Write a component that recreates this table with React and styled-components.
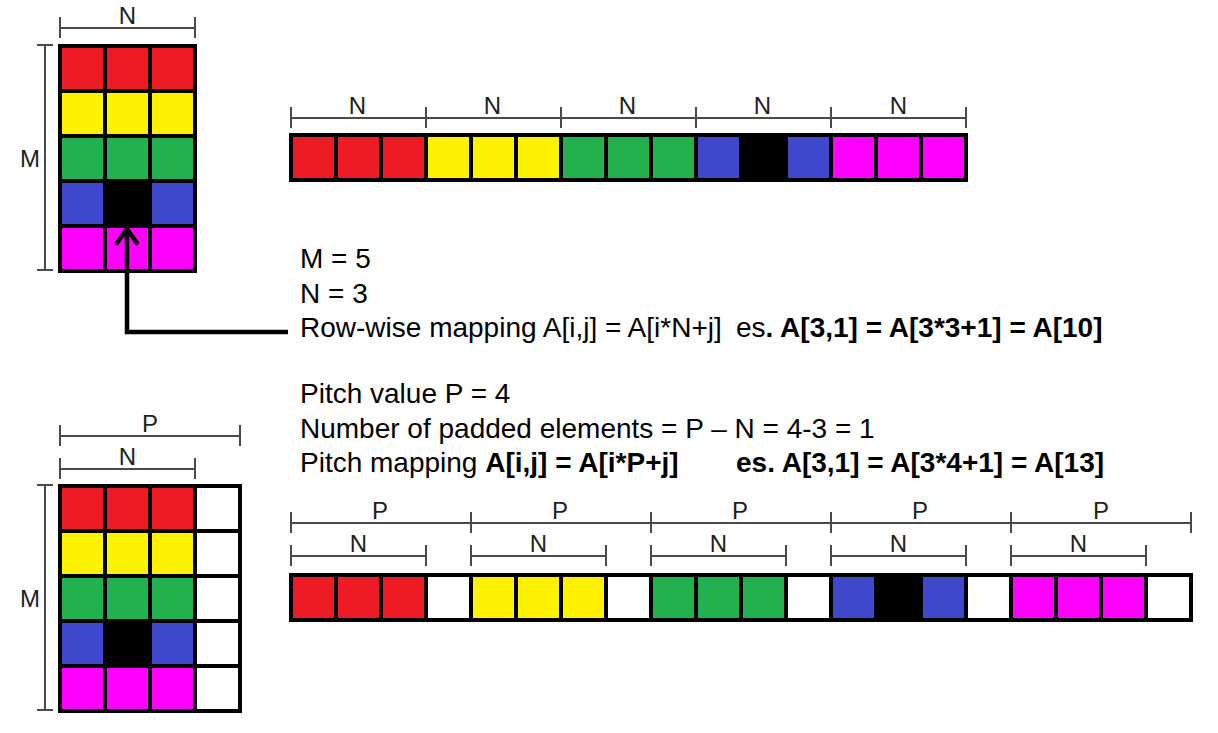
import React from "react";
import styled, { createGlobalStyle } from "styled-components";

const COLORS = {
  r: "#ED1C24",
  y: "#FFF200",
  g: "#22B14C",
  b: "#3F48CC",
  k: "#000000",
  m: "#FF00FF",
  w: "#FFFFFF",
};

const ROWS = ["rrr", "yyy", "ggg", "bkb", "mmm"];
const PADDED = ROWS.map((r) => r + "w");

const GlobalStyle = createGlobalStyle`
  body {
    margin: 0;
    background: #fff;
    font-family: "Liberation Sans", Arial, sans-serif;
  }
`;

// a horizontal dimension: label above a line with two end ticks
const Dimension = ({ label, width, open }) => (
  <Dim $w={width}>
    <DimLabel>{label}</DimLabel>
    <DimTicks $open={open} />
  </Dim>
);

const DimChain = ({ label, count, step }) => (
  <Chain>
    {Array.from({ length: count }).map((_, i) => (
      <Dimension
        key={i}
        label={label}
        width={i === count - 1 ? step + 2 : step}
        open={i !== count - 1}
      />
    ))}
  </Chain>
);

const CellGrid = ({ cells, cols }) => (
  <Grid $cols={cols}>
    {cells.split("").map((c, i) => (
      <Cell key={i} $c={COLORS[c]} />
    ))}
  </Grid>
);

const Matrix = ({ rows, dims, gap }) => (
  <MatrixFigure $gap={gap}>
    <DimStack>
      {dims.map((d) => (
        <Dimension key={d.label} label={d.label} width={d.width} />
      ))}
    </DimStack>
    <VDim>
      <VLabel>M</VLabel>
      <VTicks />
    </VDim>
    <CellGrid cells={rows.join("")} cols={rows[0].length} />
  </MatrixFigure>
);

const App = () => {
  return (
    <Page>
      <GlobalStyle />
      <Section $h={350}>
        <LeftCol $top={6}>
          <Matrix rows={ROWS} gap={6} dims={[{ label: "N", width: 137 }]} />
        </LeftCol>
        <RightCol $top={96}>
          <DimChain label="N" count={5} step={135} />
          <Strip $mt={5}>
            <CellGrid cells={ROWS.join("")} cols={15} />
          </Strip>
          <TextBlock $mt={60}>
            <Line>M = 5</Line>
            <Line>N = 3</Line>
            <Line>
              <Lead>Row-wise mapping A[i,j] = A[i*N+j]</Lead>
              es<B>. A[3,1] = A[3*3+1] = A[10]</B>
            </Line>
          </TextBlock>
        </RightCol>
      </Section>

      <Section $h={383}>
        <LeftCol $top={64}>
          <Matrix
            rows={PADDED}
            gap={5}
            dims={[
              { label: "P", width: 182 },
              { label: "N", width: 137 },
            ]}
          />
        </LeftCol>
        <RightCol $top={27}>
          <TextBlock>
            <Line>Pitch value P = 4</Line>
            <Line>Number of padded elements = P – N = 4-3 = 1</Line>
            <Line>
              <Lead>
                Pitch mapping <B>A[i,j] = A[i*P+j]</B>
              </Lead>
              <B>es. A[3,1] = A[3*4+1] = A[13]</B>
            </Line>
          </TextBlock>
          <DimGroup $mt={20.5}>
            <DimChain label="P" count={5} step={180} />
            <SpacedDims>
              {Array.from({ length: 5 }).map((_, i) => (
                <Dimension key={i} label="N" width={137} />
              ))}
            </SpacedDims>
          </DimGroup>
          <Strip $mt={7}>
            <CellGrid cells={PADDED.join("")} cols={20} />
          </Strip>
        </RightCol>
      </Section>

      <ArrowSvg width="300" height="340" viewBox="0 0 300 340">
        <polyline
          points="288,332 127,332 127,232"
          fill="none"
          stroke="#000"
          strokeWidth="4.5"
        />
        <polyline
          points="117,243 127,229 137,243"
          fill="none"
          stroke="#000"
          strokeWidth="4.5"
          strokeLinecap="round"
          strokeLinejoin="round"
        />
      </ArrowSvg>
    </Page>
  );
};

const Page = styled.div`
  position: relative;
  width: 1218px;
  height: 733px;
  overflow: hidden;
  background: #fff;
`;

const Section = styled.div`
  display: flex;
  align-items: flex-start;
  height: ${({ $h }) => $h}px;
`;

const LeftCol = styled.div`
  flex: none;
  width: 289px;
  padding-top: ${({ $top }) => $top}px;
`;

const RightCol = styled.div`
  display: flex;
  flex-direction: column;
  align-items: flex-start;
  padding-top: ${({ $top }) => $top}px;
`;

const MatrixFigure = styled.div`
  display: grid;
  grid-template-columns: 58px auto;
  row-gap: ${({ $gap }) => $gap}px;
`;

const DimStack = styled.div`
  grid-column: 2;
  display: flex;
  flex-direction: column;
  gap: 1px;
  margin-left: 1px;
`;

const Dim = styled.div`
  display: flex;
  flex-direction: column;
  flex: none;
  width: ${({ $w }) => $w}px;
`;

const DimLabel = styled.div`
  height: 20px;
  font-size: 24px;
  line-height: 20px;
  text-align: center;
  color: #1e1e1e;
`;

const DimTicks = styled.div`
  box-sizing: border-box;
  height: 21px;
  margin-top: -9px;
  border-left: 2px solid #4a4a4a;
  border-right: ${({ $open }) => ($open ? "none" : "2px solid #4a4a4a")};
  background: linear-gradient(#4a4a4a, #4a4a4a) center / 100% 2px no-repeat;
`;

const Chain = styled.div`
  display: flex;
  margin-left: 1px;
`;

const SpacedDims = styled.div`
  display: flex;
  gap: 43px;
  margin-left: 1px;
`;

const DimGroup = styled.div`
  display: flex;
  flex-direction: column;
  gap: 1px;
  margin-top: ${({ $mt }) => $mt || 0}px;
`;

const VDim = styled.div`
  display: flex;
  width: 58px;
`;

const VLabel = styled.div`
  flex: none;
  width: 17px;
  padding-left: 20px;
  align-self: center;
  font-size: 24px;
  color: #1e1e1e;
`;

const VTicks = styled.div`
  box-sizing: border-box;
  width: 16px;
  margin-bottom: 2px;
  border-top: 2px solid #4a4a4a;
  border-bottom: 2px solid #4a4a4a;
  background: linear-gradient(#4a4a4a, #4a4a4a) center / 2px 100% no-repeat;
`;

const Grid = styled.div`
  display: grid;
  grid-template-columns: repeat(${({ $cols }) => $cols}, 41px);
  grid-auto-rows: 41px;
  gap: 4px;
  padding: 4px;
  background: #000;
  width: max-content;
`;

const Cell = styled.div`
  background: ${({ $c }) => $c};
`;

const Strip = styled.div`
  margin-top: ${({ $mt }) => $mt}px;
`;

const TextBlock = styled.div`
  margin-top: ${({ $mt }) => $mt || 0}px;
  padding-left: 11px;
  font-size: 28px;
  line-height: 34.5px;
  color: #000;
  white-space: pre;
`;

const Line = styled.div``;

const Lead = styled.span`
  display: inline-block;
  width: 436px;
`;

const B = styled.strong`
  font-weight: 700;
`;

const ArrowSvg = styled.svg`
  position: absolute;
  left: 0;
  top: 0;
  pointer-events: none;
`;

export default App;
